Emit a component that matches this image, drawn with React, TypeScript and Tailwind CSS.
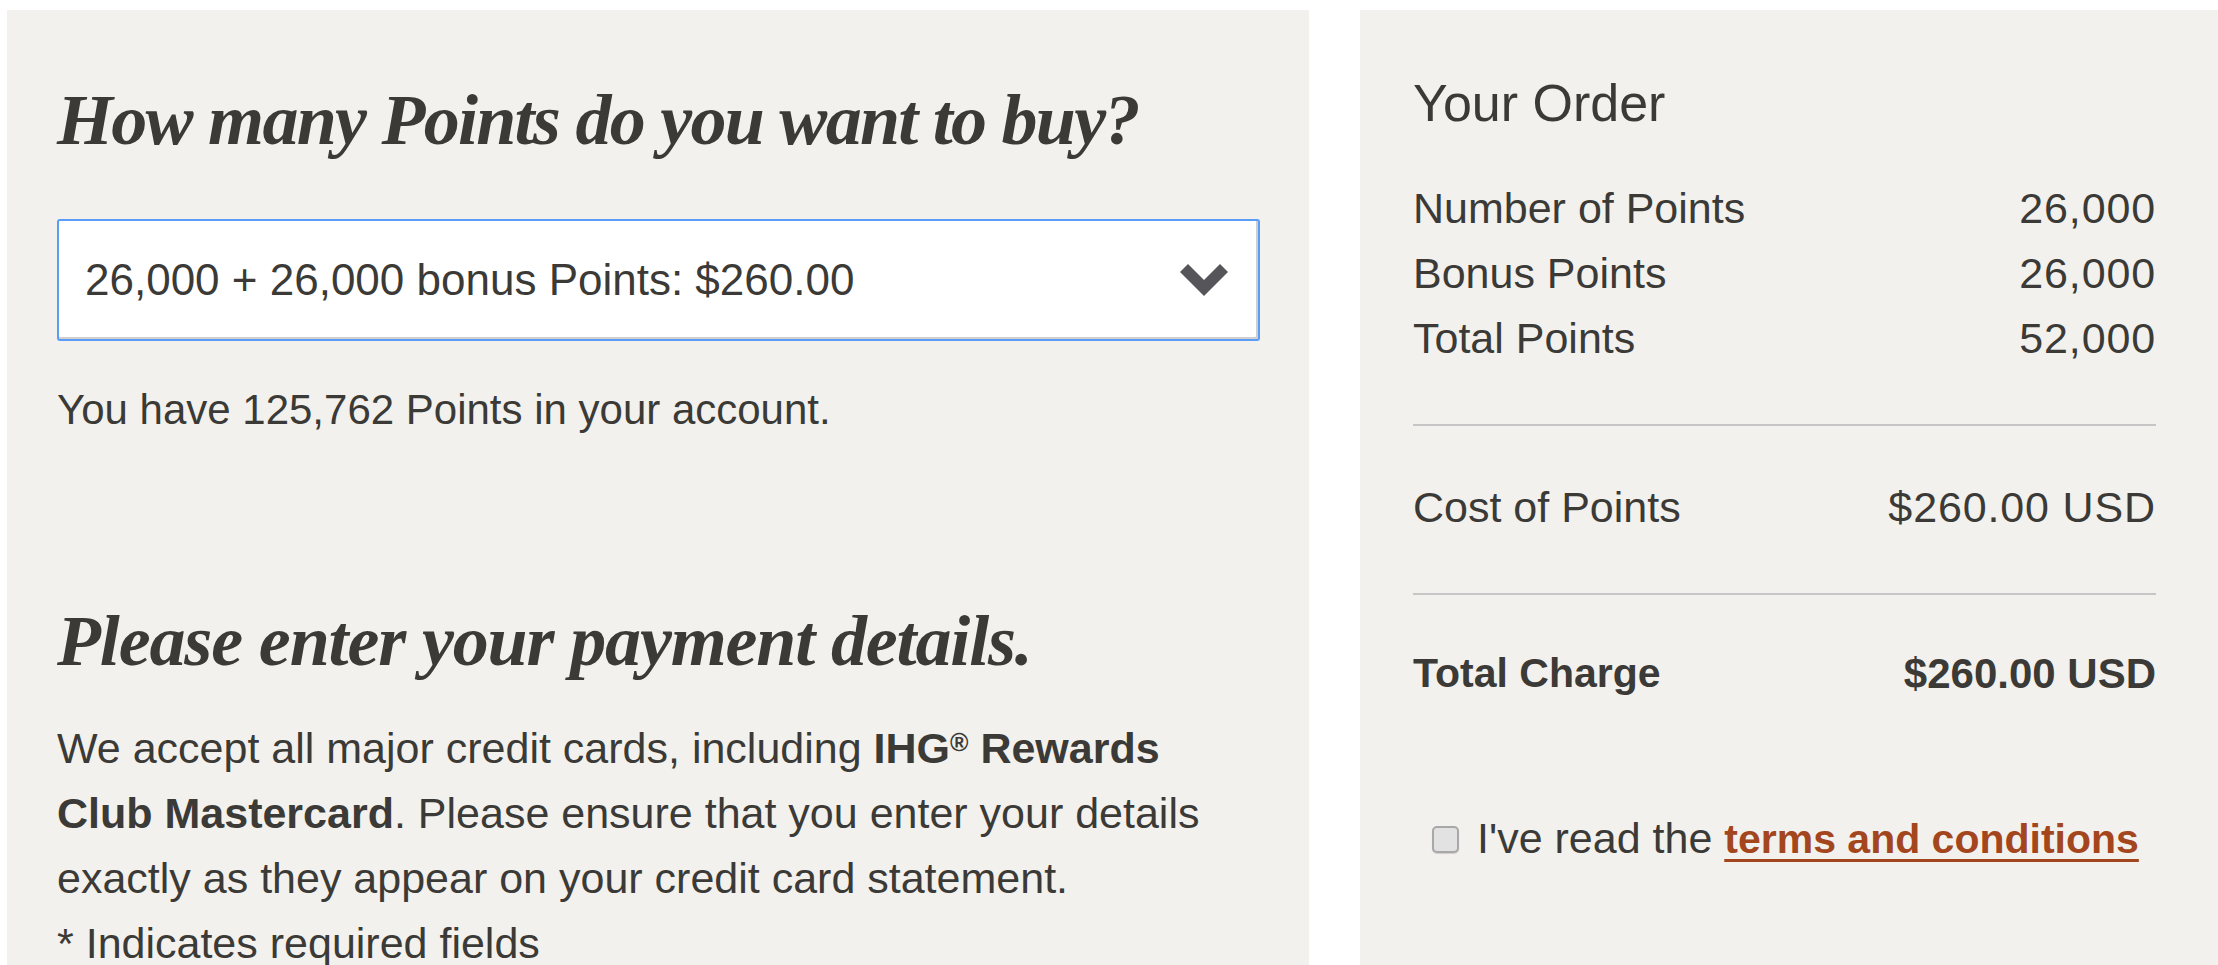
import React from "react";

const sans = "font-['Liberation_Sans',Arial,sans-serif]";
const serif = "font-['Liberation_Serif','Times_New_Roman',serif]";

const Chevron = () => (
  <svg width="48" height="32" viewBox="0 0 48 32" className="shrink-0">
    <path d="M0 8 L8 0 L24 16 L40 0 L48 8 L24 32 Z" fill="#55555a" />
  </svg>
);

const Row = ({ label, value, bold }: { label: string; value: string; bold?: boolean }) => (
  <div className={`flex justify-between leading-[65px] ${bold ? "font-bold text-[41px]" : "text-[43px]"}`}>
    <span>{label}</span>
    <span className={bold ? "text-[42px]" : "tracking-[0.02em]"}>{value}</span>
  </div>
);

export default function App() {
  return (
    <div className={`flex h-[965px] overflow-hidden bg-white pt-[10px] pl-[7px] gap-[51px] text-[#3b3a36] ${sans}`}>
      <section className="w-[1302px] shrink-0 bg-[#f2f1ed] pl-[50px] pr-[49px] pt-[74px]">
        <h1 className={`${serif} italic font-bold text-[72px] leading-none tracking-[-0.024em]`}>
          How many Points do you want to buy?
        </h1>
        <div className="mt-[63px] h-[122px] flex items-center justify-between rounded-[3px] border-2 border-[#5b9cf6] bg-white shadow-[inset_-2px_-2px_0_#cfcfcf] pl-[26px] pr-[30px]">
          <span className="text-[44px] leading-none">26,000 + 26,000 bonus Points: $260.00</span>
          <Chevron />
        </div>
        <p className="mt-[48px] text-[42px] leading-none">You have 125,762 Points in your account.</p>

        <h2 className={`${serif} mt-[174px] italic font-bold text-[72px] leading-none tracking-[-0.016em]`}>
          Please enter your payment details.
        </h2>
        <p className="mt-[39px] text-[43px] leading-[65px]">
          We accept all major credit cards, including <b>IHG<sup className="text-[25px]">®</sup> Rewards</b>
          <br />
          <b>Club Mastercard</b>. Please ensure that you enter your details
          <br />
          exactly as they appear on your credit card statement.
          <br />* Indicates required fields
        </p>
      </section>

      <aside className="flex-1 bg-[#f2f1ed] pl-[53px] pr-[62px] pt-[67px]">
        <h2 className="text-[52px] leading-none">Your Order</h2>
        <div className="mt-[47px]">
          <Row label="Number of Points" value="26,000" />
          <Row label="Bonus Points" value="26,000" />
          <Row label="Total Points" value="52,000" />
        </div>
        <hr className="mt-[53px] border-0 h-[2px] bg-[#c6c6c6]" />
        <div className="mt-[49px]">
          <Row label="Cost of Points" value="$260.00 USD" />
        </div>
        <hr className="mt-[53px] border-0 h-[2px] bg-[#c6c6c6]" />
        <div className="mt-[46px]">
          <Row label="Total Charge" value="$260.00 USD" bold />
        </div>
        <label className="mt-[100px] ml-[19px] flex items-center gap-[18px] text-[43px] leading-[65px]">
          <span className="w-[27px] h-[27px] shrink-0 rounded-[5px] border-2 border-[#a8a8a8] bg-[#e2e2e2] shadow-[0_1px_1px_rgba(0,0,0,0.15)]" />
          <span>
            I've read the{" "}
            <a href="#" className="text-[41px] font-bold text-[#a4461d] underline decoration-[3px] underline-offset-[6px]">
              terms and conditions
            </a>
          </span>
        </label>
      </aside>
    </div>
  );
}
